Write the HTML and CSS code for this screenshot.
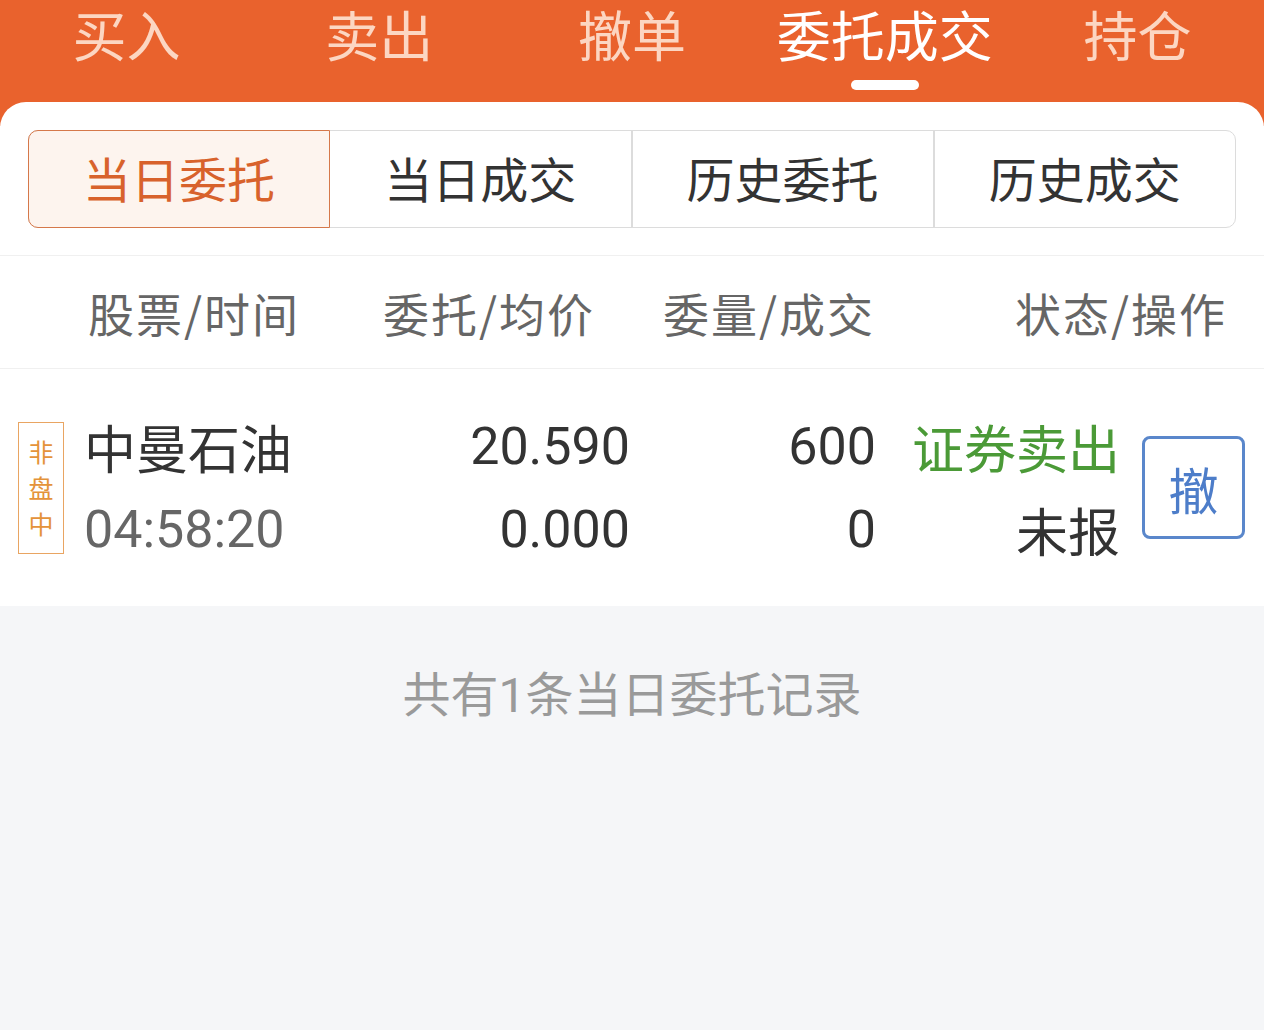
FILE: index.html
```html
<!DOCTYPE html>
<html lang="zh-CN">
<head>
  <meta charset="UTF-8" />
  <meta name="viewport" content="width=device-width, initial-scale=1.0"/>
  <title>委托成交</title>
  <link rel="stylesheet" href="styles.css">
</head>
<body>
  <div class="topbar">
    <div class="tab">买入</div>
    <div class="tab">卖出</div>
    <div class="tab">撤单</div>
    <div class="tab active">委托成交</div>
    <div class="tab">持仓</div>
  </div>

  <div class="sheet">
    <div class="segments">
      <div class="seg selected">当日委托</div>
      <div class="seg">当日成交</div>
      <div class="seg">历史委托</div>
      <div class="seg">历史成交</div>
    </div>

    <div class="col_head">
      <span>股票/时间</span>
      <span>委托/均价</span>
      <span>委量/成交</span>
      <span>状态/操作</span>
    </div>

    <div class="order_row">
      <div class="tag">非<br>盘<br>中</div>
      <div class="cell name">
        <div class="main">中曼石油</div>
        <div class="sub num">04:58:20</div>
      </div>
      <div class="cell right num">
        <div>20.590</div>
        <div>0.000</div>
      </div>
      <div class="cell right num">
        <div>600</div>
        <div>0</div>
      </div>
      <div class="cell right">
        <div class="sell">证券卖出</div>
        <div>未报</div>
      </div>
      <button class="cancel">撤</button>
    </div>
  </div>

  <div class="footer_note">共有<span class="num">1</span>条当日委托记录</div>
</body>
</html>
```

FILE: styles.css
```css
body {
  margin: 0;
  font-family: "Noto Sans CJK SC", "Noto Sans", sans-serif;
  background: #f5f6f8;
  color: #333;
}
.num {
  font-family: Roboto, "Noto Sans", sans-serif;
}
.topbar {
  display: flex;
  background: #e9622d;
  height: 126px;
}
.tab {
  flex: 1;
  text-align: center;
  font-size: 54px;
  line-height: 68px;
  color: #fcd6c2;
  position: relative;
}
.tab.active {
  color: #fff;
}
.tab.active::after {
  content: "";
  position: absolute;
  left: 50%;
  top: 80px;
  width: 68px;
  height: 10px;
  margin-left: -34px;
  border-radius: 5px;
  background: #fff;
}
.sheet {
  background: #fff;
  margin-top: -24px;
  border-radius: 26px 26px 0 0;
  padding-top: 28px;
}
.segments {
  display: flex;
  margin: 0 28px;
  height: 98px;
  border: 1px solid #dcdcdc;
  border-radius: 10px;
  box-sizing: border-box;
}
.seg {
  flex: 1;
  text-align: center;
  font-size: 48px;
  line-height: 92px;
  color: #333;
  border-left: 2px solid #dcdcdc;
}
.seg:first-child {
  border-left: none;
}
.seg.selected {
  margin: -1px 0 -1px -1px;
  border: 1px solid #d5784a;
  border-radius: 10px 0 0 10px;
  background: #fdf4ee;
  color: #d8622c;
}
.seg.selected + .seg {
  border-left: none;
}
.col_head {
  display: grid;
  grid-template-columns: 295px 280px 352px auto;
  margin-top: 27px;
  padding-left: 88px;
  height: 112px;
  line-height: 112px;
  font-size: 46px;
  letter-spacing: 2px;
  color: #666;
  border-top: 1px solid #f0f0f0;
  border-bottom: 1px solid #f0f0f0;
}
.order_row {
  display: grid;
  grid-template-columns: 46px 316px 250px 246px 244px auto;
  align-items: center;
  height: 237px;
  padding-left: 18px;
}
.tag {
  width: 46px;
  height: 132px;
  box-sizing: border-box;
  border: 1px solid #e9a562;
  color: #e4933a;
  font-size: 25px;
  line-height: 36px;
  text-align: center;
  padding-top: 10px;
}
.cell {
  font-size: 52px;
  line-height: 83px;
  color: #333;
}
.cell.name {
  padding-left: 20px;
}
.cell .sub {
  color: #666;
}
.right {
  text-align: right;
}
.sell {
  color: #4b9a37;
}
.cancel {
  margin-left: 22px;
  width: 103px;
  height: 103px;
  border: 3px solid #5a87cb;
  border-radius: 8px;
  background: #fff;
  color: #4d7dc9;
  font-family: "Noto Sans CJK SC", sans-serif;
  font-size: 50px;
  padding: 0;
}
.footer_note {
  text-align: center;
  padding-top: 56px;
  font-size: 48px;
  line-height: 58px;
  color: #9a9a9a;
}
```
